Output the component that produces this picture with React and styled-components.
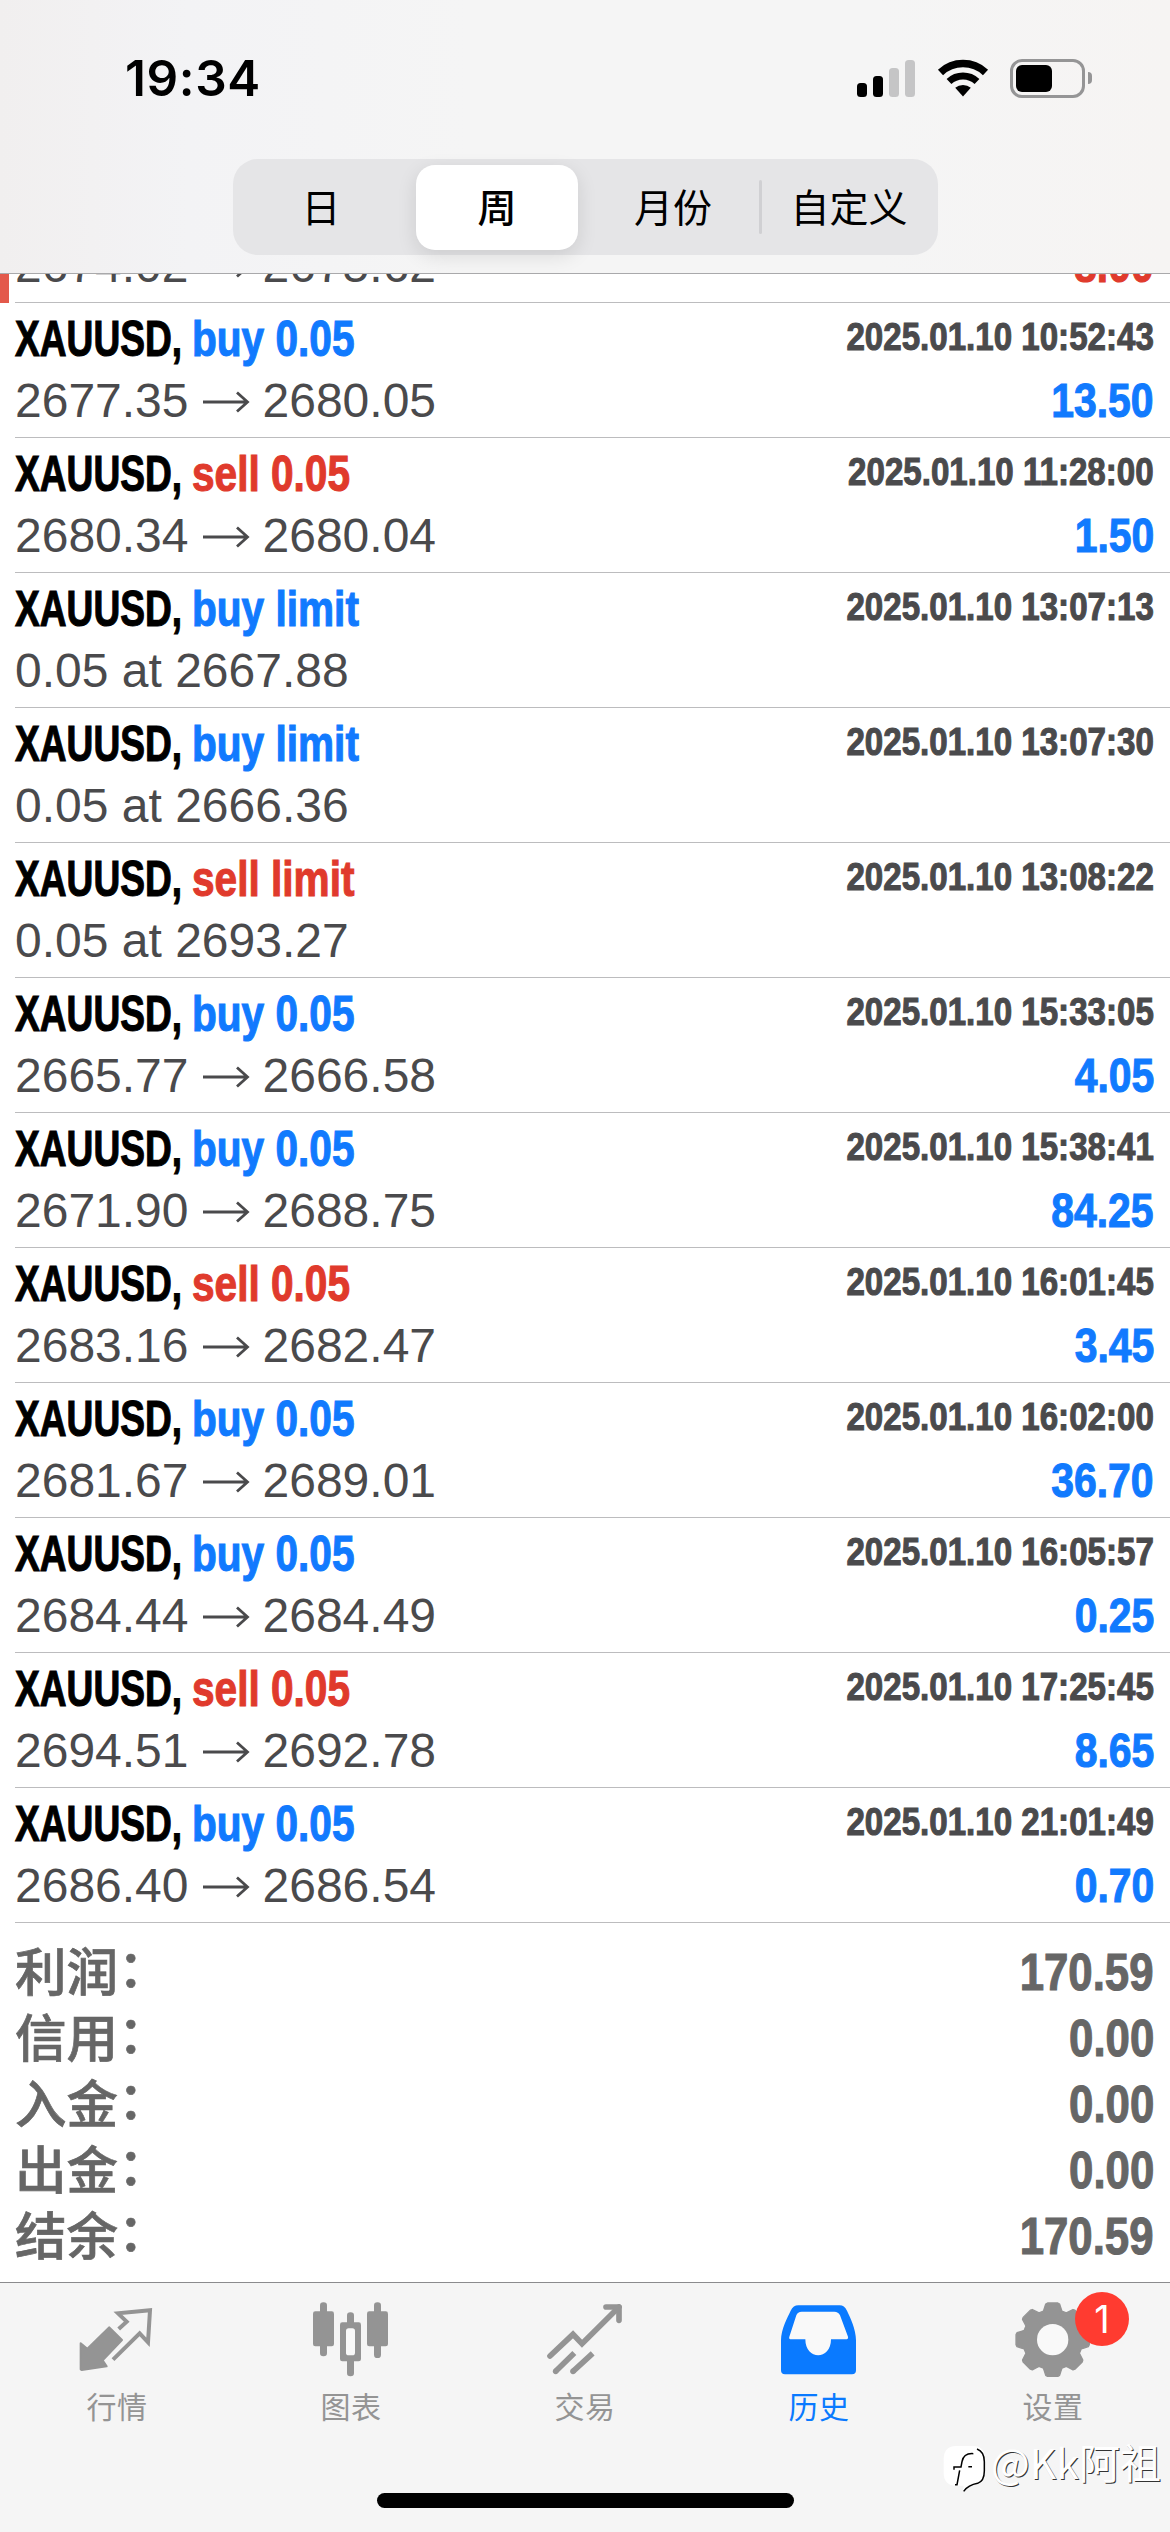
import styled, { createGlobalStyle } from "styled-components"

const BLUE = "#117afe"
const RED = "#e03a2c"

const GlobalStyle = createGlobalStyle`
  * {
    box-sizing: border-box;
  }

  body {
    margin: 0;
    background: #fff;
    font-family: "Liberation Sans", "Noto Sans CJK SC", sans-serif;
  }
`

const Screen = styled.div`
  position: relative;
  width: 1170px;
  height: 2532px;
  display: flex;
  flex-direction: column;
  overflow: hidden;
  background: #fff;
`

/* Header */

const Header = styled.header`
  flex: none;
  height: 274px;
  border-bottom: 1px solid #a9a9ab;
  background: linear-gradient(90deg, #f1efef 0%, #f3f3f5 16%, #f5f5f5 40%, #f5f5f5 75%, #f6f4f3 100%);
`

const StatusBar = styled.div`
  height: 159px;
  padding: 0 78px 3px 125px;
  display: flex;
  align-items: center;
  justify-content: space-between;
`

const Clock = styled.span`
  padding-bottom: 1px;
  font-family: Inter, sans-serif;
  font-size: 49.5px;
  font-weight: 600;
  letter-spacing: 0.6px;
  color: #000;
`

const StatusIcons = styled.div`
  display: flex;
  align-items: center;
`

const SignalBars = styled.div`
  height: 37px;
  display: flex;
  align-items: flex-end;
  gap: 6px;
  margin-right: 22px;
`

const SignalBar = styled.span`
  width: 10px;
  height: ${(p) => p.$height}px;
  border-radius: 3.5px;
  background: ${(p) => (p.$on ? "#000" : "#c5c5c6")};
`

const WifiIcon = styled.svg`
  width: 52px;
  height: 38px;
  margin-right: 21px;
`

const Battery = styled.div`
  width: 75px;
  height: 39px;
  padding: 3px;
  border: 3px solid #959596;
  border-radius: 12px;
`

const BatteryLevel = styled.div`
  width: 36px;
  height: 27px;
  border-radius: 6px;
  background: #000;
`

const BatteryCap = styled.div`
  width: 4px;
  height: 12px;
  margin-left: 3px;
  border-radius: 0 4px 4px 0;
  background: #959596;
`

const Segments = styled.div`
  width: 705px;
  height: 96px;
  margin-left: 233px;
  display: flex;
  align-items: center;
  border-radius: 25px;
  background: #e5e5e7;
`

const Segment = styled.button`
  flex: none;
  width: ${(p) => (p.$active ? 162 : 176)}px;
  height: 85px;
  margin: 0 ${(p) => (p.$active ? 7 : 0)}px;
  padding: 0 0 4px;
  border: 0;
  border-radius: 19px;
  background: ${(p) => (p.$active ? "#fff" : "transparent")};
  box-shadow: ${(p) => (p.$active ? "0 6px 20px rgba(0, 0, 0, 0.11)" : "none")};
  font-family: "Noto Sans CJK SC", sans-serif;
  font-size: 39px;
  font-weight: ${(p) => (p.$active ? 500 : 400)};
  color: #000;
`

const SegmentDivider = styled.span`
  width: 3px;
  height: 54px;
  margin: 0 -1px 0 -2px;
  border-radius: 2px;
  background: #d0d0d3;
`

/* Deal list */

/* condensed bold face, made by narrowing the regular one */
const Condensed = styled.span`
  display: inline-block;
  transform: scaleX(${(p) => p.$x});
  transform-origin: ${(p) => p.$from || "left"} center;
  font-weight: 700;
  -webkit-text-stroke: 1.1px currentColor;
`

const List = styled.main`
  flex: 1;
  min-height: 0;
  overflow: hidden;
`

const Line = styled.div`
  height: 63px;
  display: flex;
  align-items: flex-start;
  justify-content: space-between;
  line-height: 63px;
  white-space: nowrap;

  /* a deal half scrolled under the header has only its price line left */
  &:only-child {
    margin-top: 63px;
  }
`

const Row = styled.div`
  height: 135px;
  padding-left: 6px;
  border-left: 9px solid ${(p) => (p.$marked ? "#e3594b" : "transparent")};

  &:first-child {
    margin-top: -106px;
  }
`

const RowBody = styled.div`
  height: 135px;
  padding: 3px 16px 0 0;
  border-bottom: 1px solid #bcbcbe;
`

const Deal = styled.div`
  display: flex;
  padding-top: 1px;
  font-size: 49.5px;
`

const SymbolName = styled.span`
  width: 177px;
  color: #000;
`

const Side = styled.span`
  color: ${(p) => (p.$sell ? RED : BLUE)};
`

const Time = styled.span`
  font-size: 39.5px;
  line-height: 60px;
  color: #4a4a4c;
`

const Prices = styled.span`
  display: flex;
  font-size: 48px;
  color: #4a4a4c;
`

const ArrowIcon = styled.svg`
  width: 48px;
  height: 22px;
  margin: 22px 13px 0;
`

const Profit = styled.span`
  font-size: 49px;
  color: ${(p) => (p.$loss ? RED : BLUE)};
`

/* Totals */

const Summary = styled.div`
  padding: 16px 16px 0 15px;
`

const SummaryRow = styled.div`
  height: 66px;
  display: flex;
  justify-content: space-between;
  line-height: 66px;
  color: #666;
`

const SummaryLabel = styled.span`
  height: 60px;
  font-family: "Noto Sans CJK SC", sans-serif;
  font-size: 51.5px;
  line-height: 60px;
  font-weight: 500;
  -webkit-text-stroke: 0.7px currentColor;
`

const Colon = styled.span`
  line-height: 1;
  vertical-align: 4px;
`

const SummaryValue = styled.span`
  font-size: 51.5px;
`

/* Tab bar */

const TabBar = styled.nav`
  flex: none;
  height: 250px;
  display: flex;
  flex-direction: column;
  justify-content: space-between;
  align-items: center;
  padding-bottom: 24px;
  border-top: 1px solid #8b8b8d;
  background: #f5f5f5;
`

const Tabs = styled.div`
  width: 100%;
  display: flex;
`

const Tab = styled.div`
  position: relative;
  flex: 1;
  padding-top: 18px;
  display: flex;
  flex-direction: column;
  align-items: center;
  color: ${(p) => (p.$active ? "#0a7aff" : "#949494")};
`

const TabIcon = styled.svg`
  width: 76px;
  height: 76px;
`

const TabLabel = styled.span`
  margin-top: 8px;
  font-family: "Noto Sans CJK SC", sans-serif;
  font-size: 30px;
  line-height: 40px;
  letter-spacing: 0.5px;
`

const Badge = styled.span`
  position: absolute;
  top: 9px;
  left: 139px;
  width: 54px;
  height: 54px;
  display: flex;
  align-items: center;
  justify-content: center;
  border-radius: 50%;
  background: #ff3b30;
  font-family: Inter, sans-serif;
  font-size: 38px;
  color: #fff;
`

const HomeIndicator = styled.div`
  width: 417px;
  height: 15px;
  border-radius: 8px;
  background: #000;
`

const Watermark = styled.div`
  position: absolute;
  top: 2440px;
  left: 943px;
  height: 56px;
  display: flex;
  align-items: center;
  gap: 5px;
  white-space: nowrap;
`

const WatermarkLogo = styled.svg`
  width: 43px;
  height: 48px;
`

const WatermarkText = styled.span`
  margin-bottom: 14px;
  font-family: "Noto Sans CJK SC", sans-serif;
  font-size: 41px;
  font-weight: 400;
  line-height: 56px;
  color: #fff;
  text-shadow: 1px 1px 0 #333;
`

const deals = [
  { side: "buy", open: "2674.02", close: "2675.62", profit: "-8.00", marked: true },
  { side: "buy", size: "0.05", time: "2025.01.10 10:52:43", open: "2677.35", close: "2680.05", profit: "13.50" },
  { side: "sell", size: "0.05", time: "2025.01.10 11:28:00", open: "2680.34", close: "2680.04", profit: "1.50" },
  { side: "buy", size: "limit", time: "2025.01.10 13:07:13", order: "0.05 at 2667.88" },
  { side: "buy", size: "limit", time: "2025.01.10 13:07:30", order: "0.05 at 2666.36" },
  { side: "sell", size: "limit", time: "2025.01.10 13:08:22", order: "0.05 at 2693.27" },
  { side: "buy", size: "0.05", time: "2025.01.10 15:33:05", open: "2665.77", close: "2666.58", profit: "4.05" },
  { side: "buy", size: "0.05", time: "2025.01.10 15:38:41", open: "2671.90", close: "2688.75", profit: "84.25" },
  { side: "sell", size: "0.05", time: "2025.01.10 16:01:45", open: "2683.16", close: "2682.47", profit: "3.45" },
  { side: "buy", size: "0.05", time: "2025.01.10 16:02:00", open: "2681.67", close: "2689.01", profit: "36.70" },
  { side: "buy", size: "0.05", time: "2025.01.10 16:05:57", open: "2684.44", close: "2684.49", profit: "0.25" },
  { side: "sell", size: "0.05", time: "2025.01.10 17:25:45", open: "2694.51", close: "2692.78", profit: "8.65" },
  { side: "buy", size: "0.05", time: "2025.01.10 21:01:49", open: "2686.40", close: "2686.54", profit: "0.70" },
]

const totals = [
  ["利润", "170.59"],
  ["信用", "0.00"],
  ["入金", "0.00"],
  ["出金", "0.00"],
  ["结余", "170.59"],
]

// eight-tooth gear outline around (113, 116)
const gearPath = () => {
  const points = []
  for (let i = 0; i < 8; i++) {
    const steps = [[-18, 90], [-15, 97], [-11, 109], [-8, 111], [8, 111], [11, 109], [15, 97], [18, 90]]
    steps.forEach(([offset, r]) => {
      const a = ((i * 45 + offset) * Math.PI) / 180
      points.push(`${(113 + r * Math.sin(a)).toFixed(1)} ${(116 - r * Math.cos(a)).toFixed(1)}`)
    })
  }
  return `M${points.join("L")}Z`
}

const QuotesIcon = () => (
  <TabIcon viewBox="0 0 228 228">
    <path
      d="M5 127L25 143L91 79L129 117L71 178L83 196L8 207L5 205Z"
      fill="currentColor"
      stroke="currentColor"
      strokeWidth="6"
      strokeLinejoin="round"
    />
    <path
      d="M119 84L143 62L117 37L213 28L207 124L182 97L102 176"
      fill="none"
      stroke="currentColor"
      strokeWidth="12"
    />
  </TabIcon>
)

const ChartIcon = () => (
  <TabIcon viewBox="0 0 228 228" fill="currentColor">
    <rect x="21" y="4" width="21" height="162" rx="10" />
    <rect x="0" y="31" width="63" height="105" rx="7" />
    <rect x="102" y="34" width="21" height="192" rx="10" />
    <rect x="81" y="64" width="63" height="117" rx="7" />
    <rect x="99" y="82" width="27" height="81" rx="8" fill="#f9f9f9" />
    <rect x="183" y="4" width="21" height="167" rx="10" />
    <rect x="162" y="31" width="63" height="105" rx="7" />
  </TabIcon>
)

const TradeIcon = () => (
  <TabIcon viewBox="0 0 228 228" fill="none" stroke="currentColor" strokeWidth="17">
    <path d="M9 165L78 100L105 128L216 18" strokeLinecap="round" />
    <path d="M177 18H216V58" strokeLinecap="round" strokeLinejoin="round" />
    <path d="M26 211L82 156M78 211L137 157" />
    <circle cx="26" cy="211" r="8.5" fill="currentColor" stroke="none" />
    <circle cx="78" cy="211" r="8.5" fill="currentColor" stroke="none" />
  </TabIcon>
)

const HistoryIcon = () => (
  <TabIcon viewBox="0 0 228 228">
    <path
      d="M0 208V118C0 85 20 48 29 29Q37 13 52 13H176Q190 13 198 29C207 48 225 85 225 118V208Q225 220 213 220H12Q0 220 0 208Z"
      fill="currentColor"
    />
    <path
      d="M62 32H160Q172 32 177 43L201 107Q203 115 193 115H150C150 179 73 179 73 115H32Q22 115 25 107L46 43Q50 32 62 32Z"
      fill="#f9f9f9"
    />
  </TabIcon>
)

const SettingsIcon = () => (
  <TabIcon viewBox="0 0 228 228">
    <path d={gearPath()} fill="currentColor" stroke="currentColor" strokeWidth="4" strokeLinejoin="round" />
    <circle cx="113" cy="116" r="47" fill="#f9f9f9" />
  </TabIcon>
)

const tabs = [
  { label: "行情", Icon: QuotesIcon },
  { label: "图表", Icon: ChartIcon },
  { label: "交易", Icon: TradeIcon },
  { label: "历史", Icon: HistoryIcon, active: true },
  { label: "设置", Icon: SettingsIcon, badge: "1" },
]

const DealRow = ({ deal }) => (
  <Row $marked={deal.marked}>
    <RowBody>
      {deal.time && (
        <Line>
          <Deal>
            <SymbolName>
              <Condensed $x={0.75}>XAUUSD,</Condensed>
            </SymbolName>
            <Side $sell={deal.side === "sell"}>
              <Condensed $x={0.82}>
                {deal.side} {deal.size}
              </Condensed>
            </Side>
          </Deal>
          <Time>
            <Condensed $x={0.838} $from="right">{deal.time}</Condensed>
          </Time>
        </Line>
      )}
      <Line>
        {deal.order ? (
          <Prices>{deal.order}</Prices>
        ) : (
          <Prices>
            {deal.open}
            <ArrowIcon viewBox="0 0 48 22" fill="none" stroke="currentColor" strokeWidth="2.8">
              <path d="M1 11H45M35 1.5L45.500 11L35 20.500" />
            </ArrowIcon>
            {deal.close}
          </Prices>
        )}
        {deal.profit && (
          <Profit $loss={deal.profit.startsWith("-")}>
            <Condensed $x={0.835} $from="right">{deal.profit}</Condensed>
          </Profit>
        )}
      </Line>
    </RowBody>
  </Row>
)

const App = () => {
  return (
    <Screen>
      <GlobalStyle />
      <Header>
        <StatusBar>
          <Clock>19:34</Clock>
          <StatusIcons>
            <SignalBars>
              <SignalBar $height={14} $on />
              <SignalBar $height={21} $on />
              <SignalBar $height={29} />
              <SignalBar $height={37} />
            </SignalBars>
            <WifiIcon viewBox="0 0 52 38" fill="none" stroke="#000">
              <path d="M3.500 13.400A33 33 0 0 1 48.500 13.400" strokeWidth="7.500" />
              <path d="M12 22.500A20.500 20.500 0 0 1 40 22.500" strokeWidth="7" />
              <path d="M26 37.500L18.200 28.800A12 12 0 0 1 33.800 28.800Z" fill="#000" stroke="none" />
            </WifiIcon>
            <Battery>
              <BatteryLevel />
            </Battery>
            <BatteryCap />
          </StatusIcons>
        </StatusBar>
        <Segments>
          <Segment>日</Segment>
          <Segment $active>周</Segment>
          <Segment>月份</Segment>
          <SegmentDivider />
          <Segment>自定义</Segment>
        </Segments>
      </Header>

      <List>
        {deals.map((deal) => (
          <DealRow key={deal.open || deal.order} deal={deal} />
        ))}
        <Summary>
          {totals.map(([label, value]) => (
            <SummaryRow key={label}>
              <SummaryLabel>
                {label}
                <Colon>：</Colon>
              </SummaryLabel>
              <SummaryValue>
                <Condensed $x={0.85} $from="right">{value}</Condensed>
              </SummaryValue>
            </SummaryRow>
          ))}
        </Summary>
      </List>

      <TabBar>
        <Tabs>
          {tabs.map(({ label, Icon, active, badge }) => (
            <Tab key={label} $active={active}>
              <Icon />
              <TabLabel>{label}</TabLabel>
              {badge && <Badge>{badge}</Badge>}
            </Tab>
          ))}
        </Tabs>
        <HomeIndicator />
      </TabBar>

      <Watermark>
        <WatermarkLogo viewBox="36 45 129 144">
          <path
            d="M76 51H126Q161 51 162 88V134Q162 160 138 166Q112 170 98 188Q96 178 98 170H76Q40 170 38 134V88Q40 51 76 51Z"
            fill="#fff"
          />
          <path
            d="M138 60Q160 68 160 98V126Q160 156 140 163Q112 168 98 187M127 74Q98 72 93 98L90 114H69V122M86 124L78 167H72M112 113H123"
            fill="none"
            stroke="#000"
            strokeWidth="4.5"
          />
        </WatermarkLogo>
        <WatermarkText>@Kk阿祖</WatermarkText>
      </Watermark>
    </Screen>
  )
}

export default App
